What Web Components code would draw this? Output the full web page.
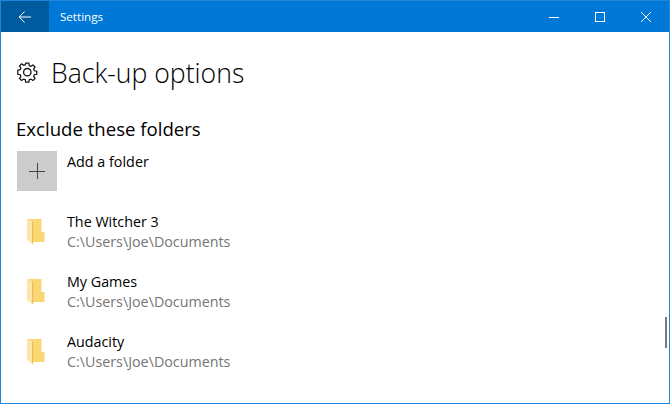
<!DOCTYPE html>
<html><head><meta charset="utf-8"><title>Settings</title>
<style>
html,body{margin:0;padding:0;background:#fff}
body{width:670px;height:404px;overflow:hidden;font-family:"Open Sans","Noto Sans","Liberation Sans",sans-serif}
</style></head><body>
<settings-window>
  <title-bar slot="bar">Settings</title-bar>
  <page-header>Back-up options</page-header>
  <section-title>Exclude these folders</section-title>
  <add-row>Add a folder</add-row>
  <folder-row name="The Witcher 3" path="C:\Users\Joe\Documents"></folder-row>
  <folder-row name="My Games" path="C:\Users\Joe\Documents"></folder-row>
  <folder-row name="Audacity" path="C:\Users\Joe\Documents"></folder-row>
</settings-window>
<script>
function def(name, html){
  customElements.define(name, class extends HTMLElement{
    connectedCallback(){
      if(this.shadowRoot) return;
      const r=this.attachShadow({mode:'open'});
      r.innerHTML=typeof html==='function'?html(this):html;
    }
  });
}
def('settings-window',`<style>
:host{display:flex;flex-direction:column;position:relative;width:670px;height:404px;box-sizing:border-box;border:1px solid #1f86d9;background:#fff;overflow:hidden}
.content{display:flex;flex-direction:column;padding:0 0 0 15px}
.thumb{position:absolute;right:2px;top:316px;width:2px;height:31px;background:#7a7a7a}
</style><slot name="bar"></slot><div class="content"><slot></slot></div><div class="thumb"></div>`);
def('title-bar',`<style>
:host{display:flex;align-items:stretch;height:31px;background:#0078d7;color:#fff;font-size:11.6px;flex:none}
.back{width:48px;display:flex;align-items:center;justify-content:center;background:#005a9e}
.t{padding-left:11px;line-height:31px;flex:1}
.b{width:46px;display:flex;align-items:center;justify-content:center}
svg{display:block}
</style><div class="back"><svg width="14" height="14" viewBox="0 0 14 14" fill="none" stroke="#fff" stroke-width="1"><path d="M13 7H1.2M6.6 1.5 1.2 7l5.4 5.5"/></svg></div>
<div class="t"><slot></slot></div>
<div class="b"><svg width="10" height="10" viewBox="0 0 10 10" fill="none" stroke="#fff"><path d="M0 5.5H10"/></svg></div>
<div class="b"><svg width="10" height="10" viewBox="0 0 10 10" fill="none" stroke="#fff"><rect x=".5" y=".5" width="9" height="9"/></svg></div>
<div class="b"><svg width="10" height="10" viewBox="0 0 10 10" fill="none" stroke="#fff"><path d="M0 0 10 10M10 0 0 10"/></svg></div>`);
def('page-header',`<style>
:host{display:flex;align-items:center;height:28px;margin-top:26px;margin-left:1px;color:#000;font-size:26.6px;font-weight:300;gap:13px;white-space:nowrap}
svg{flex:none;display:block}
span{margin-top:2px}
</style><svg width="21" height="21" viewBox="0 0 21 21" fill="none" stroke="#111" stroke-width="1.3"><path d="M8.9 1.2h3.2l.5 2.6 1.7.7 2.2-1.5 2.2 2.3-1.5 2.1.7 1.7 2.6.5v3.2l-2.6.5-.7 1.7 1.5 2.2-2.2 2.2-2.2-1.5-1.7.7-.5 2.6H8.9l-.5-2.6-1.7-.7-2.2 1.5-2.2-2.2 1.5-2.2-.7-1.7-2.6-.5V8.5l2.6-.5.7-1.7-1.5-2.1 2.2-2.3 2.2 1.5 1.7-.7z" transform="translate(.3 .1) scale(.95)"/><circle cx="10.3" cy="10.2" r="3.7"/></svg><span><slot></slot></span>`);
def('section-title',`<style>
:host{display:block;margin-top:30px;height:26px;line-height:26px;font-size:18.6px;color:#000;white-space:nowrap}
</style><slot></slot>`);
def('add-row',`<style>
:host{display:flex;gap:10px;margin-top:9px;height:40px;font-size:14.35px;color:#000;margin-left:1px}
.tile{width:40px;height:40px;background:#ccc;display:flex;align-items:center;justify-content:center;flex:none}
.l{line-height:20px;padding-top:1px}
svg{display:block}
</style><div class="tile"><svg width="16" height="16" viewBox="0 0 16 16" stroke="#444" stroke-width="1"><path d="M0 8.5H16M8.5 0V16"/></svg></div><div class="l"><slot></slot></div>`);
def('folder-row',el=>`<style>
:host{display:flex;gap:10px;margin-top:21px;height:39px;font-size:14.3px;line-height:20px;color:#000;margin-left:1px}
.i{width:40px;height:39px;display:flex;align-items:flex-start;justify-content:flex-start;flex:none;padding:5px 0 0 10px;box-sizing:border-box}
.p{color:#767676}
svg{display:block;flex:none}
</style><div class="i"><svg width="19" height="28" viewBox="0 0 19 28"><path d="M0 2H14.5V15H17.5V25H6L0 22Z" fill="#fad774"/><path d="M0 2 5 4.5V27L0 23Z" fill="#fde7a8"/><path d="M5 4.5 6.2 5V26.5L5 27Z" fill="#e9bc55"/></svg></div><div><div>${el.getAttribute('name')}</div><div class="p">${el.getAttribute('path').replace(/&/g,'&amp;')}</div></div>`);
</script>
</body></html>
